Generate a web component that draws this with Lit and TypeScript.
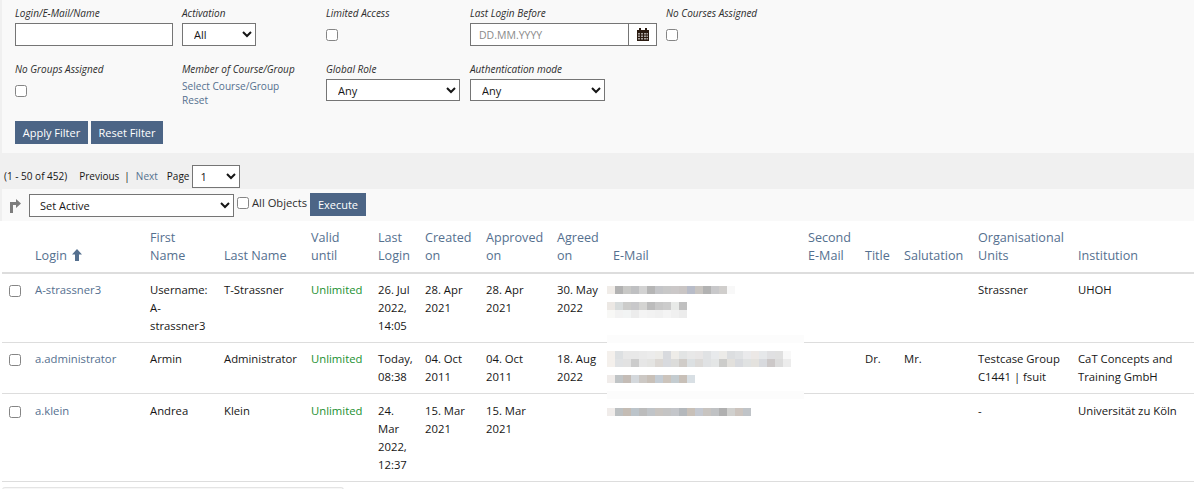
import { LitElement, css, html } from 'lit'
import { customElement } from 'lit/decorators.js'

const rows = [
  {
    login: 'A-strassner3', first: 'Username: A-strassner3', last: 'T-Strassner',
    lastLogin: '26. Jul 2022, 14:05', created: '28. Apr 2021', approved: '28. Apr 2021', agreed: '30. May 2022',
    title: '', salutation: '', org: 'Strassner', inst: 'UHOH',
    blurTop: 12,
    halo: null,
    pixels: [
      'f0ece8 b2b2b2 c8c8c6 bfc0c2 d2d2d2 b5b5b5 c4c5c8 c8c8c8 cbc8c8 c9c5c4 b8bcc8 c8c4c0 b2b2b2 c8c8ca d0cecc f8f8f8',
      '',
      'ece8e4 d8dcdc ccccca c8c8ca d4d4d2 bcbcbc c8c8c8 cccccc e8eae8 c0c0c0',
      'f8f8f6 f2f2f2 f2f4f4 ececec f4f4f4 f2f2f2 f0f0f0 f4f4f4 f0f0f0 ececec',
    ],
  },
  {
    login: 'a.administrator', first: 'Armin', last: 'Administrator',
    lastLogin: 'Today, 08:38', created: '04. Oct 2011', approved: '04. Oct 2011', agreed: '18. Aug 2022',
    title: 'Dr.', salutation: 'Mr.', org: 'Testcase Group C1441 | fsuit', inst: 'CaT Concepts and Training GmbH',
    blurTop: 8,
    halo: -8,
    pixels: [
      'f4f0ec dde0e2 e8e8e8 e8e8e8 eaeaea ececec ecebe8 d8dade eeece8 e2e4e4 e8e8e8 e8e6e6 e0e2e4 e8eaec ecebe8 dcdee0 e0e2e4 eaeaec ece8e6 e6e8ea e0e0e2 e0e0e0 f8f8f8',
      'f4f0ec e0e2e4 e2e2e2 cccccc e6e6e6 e4e4e2 dcd8d4 d8dade dcdcda d0ccc8 dce0e2 dcdad8 e0e2e4 e4e6e6 ccccca e2e0dc d8dade e0e2e2 e4e2de d8dade ccc8c8 dcdcdc ececec',
      '',
      'f0ecea c0c4c6 c4bcb6 d4d8dc ccc8c4 c8c0b8 c4ccd4 ccc4bc c4ccd0 c8c0b8 d8dfe4',
    ],
  },
  {
    login: 'a.klein', first: 'Andrea', last: 'Klein',
    lastLogin: '24. Mar 2022, 12:37', created: '15. Mar 2021', approved: '15. Mar 2021', agreed: '',
    title: '', salutation: '', org: '-', inst: 'Universität zu Köln',
    blurTop: 14,
    halo: -3,
    pixels: [
      'f0ecea bcc0c2 c4bcb4 bcc4ca bcbcbc c0c4c8 c8c4c0 c4c4c4 c4c6ca b4b8bc c8c0b8 c4c8d0 c8c4c0 c0c2c4 b0b0b0 d0d0ce ccc4be c0c4c8',
    ],
  },
]

const colWidths = [27, 115, 74, 87, 67, 47, 61, 71, 56, 195, 57, 39, 74, 100, 122]

@customElement('app-root')
export class AppRoot extends LitElement {
  static styles = css`
    :host {
      display: block;
      width: 1194px;
      height: 489px;
      overflow: hidden;
      background: #fff;
      font-family: 'Open Sans', sans-serif;
      font-size: 11px;
      color: #161616;
    }
    .top { background: #f0f0f0; padding-left: 2px; }
    .filter {
      height: 153px;
      box-sizing: border-box;
      padding: 6px 13px 0;
      background: #f9f9f9;
    }
    .filter-row {
      display: grid;
      grid-template-columns: 167px 144px 144px 196px auto;
      height: 56px;
    }
    .filter-row label {
      display: block;
      font-style: italic;
      font-size: 10px;
      line-height: 15px;
      color: #2d2d2d;
      margin-bottom: 2px;
    }
    input[type='text'],
    select {
      box-sizing: border-box;
      height: 23px;
      border: 1px solid #757575;
      border-radius: 0;
      background-color: #fff;
      font: 11px 'Open Sans', sans-serif;
      color: #161616;
      outline: none;
    }
    select { padding: 0 0 0 7px; }
    input[type='checkbox'] {
      appearance: none;
      box-sizing: border-box;
      display: block;
      width: 12px;
      height: 12px;
      margin: 0;
      background: #fff;
      border: 1px solid #858585;
      border-radius: 2.5px;
    }
    .filter-row input.check { margin-top: 8px; }
    .date { display: flex; width: 187px; height: 23px; }
    .date input { flex: 1; min-width: 0; padding: 0 8px; border-right: none; font-size: 10.5px; }
    .date input::placeholder { color: #8a8a8a; opacity: 1; }
    .date span {
      width: 29px;
      box-sizing: border-box;
      border: 1px solid #757575;
      background: #fff;
      display: flex;
      align-items: center;
      justify-content: center;
    }
    a { color: #55708f; text-decoration: none; }
    .links { line-height: 14px; font-size: 10.1px; }
    .links a { display: block; }
    .buttons { display: flex; gap: 3px; margin-top: 3px; }
    button {
      border: none;
      background: #4c6586;
      color: #fff;
      font: 11px 'Open Sans', sans-serif;
      height: 23px;
      padding: 0;
    }
    .pager {
      height: 36px;
      box-sizing: border-box;
      padding: 12px 0 0 2px;
      display: flex;
      font-size: 10px;
      line-height: 22px;
      align-items: flex-start;
    }
    .pager .next { color: #55708f; margin-left: 6px; }
    .pager select { width: 48px; height: 23px; margin-left: 3px; padding-left: 3px; }
    .actions {
      height: 32px;
      box-sizing: border-box;
      background: #f9f9f9;
      display: flex;
      align-items: flex-start;
      padding-top: 4px;
    }
    .actions svg { margin: 6px 8px 0 8px; }
    .actions select { width: 205px; height: 23px; margin: 1px 3px 0 0; padding-left: 6px; }
    .actions label {
      display: flex;
      align-items: center;
      font-size: 11.2px;
      line-height: 20px;
      color: #2d2d2d;
      margin-right: 3px;
    }
    .actions input[type='checkbox'] { margin-right: 3px; }
    .actions button { width: 56px; }
    table {
      margin-left: 2px;
      width: 1192px;
      table-layout: fixed;
      border-collapse: collapse;
      font-size: 11.3px;
      line-height: 18px;
    }
    th {
      font-weight: 400;
      font-size: 12.6px;
      color: #55708f;
      text-align: left;
      vertical-align: bottom;
      padding: 8px 6px 7px;
      border-bottom: 2px solid #ddd;
      line-height: 18px;
    }
    td {
      vertical-align: top;
      padding: 7px 6px;
      border-bottom: 1px solid #ddd;
      color: #161616;
    }
    tr:last-child td { padding-top: 8px; }
    td input[type='checkbox'] { margin: 4px 0 0 1px; }
    td.email { position: relative; }
    .ok { color: #209030; }
    .arrow { vertical-align: -1px; margin-left: 2px; }
    .blur { position: absolute; left: 0; right: 0; top: 0; }
    .halo {
      position: absolute;
      left: 0;
      width: 197px;
      height: 8px;
      background: #fcfcfc;
    }
    .strip { display: flex; height: 8px; }
    .strip i { display: block; width: 8px; height: 8px; }
    .scroll {
      margin: 5px 0 0 2px;
      width: 342px;
      height: 4px;
      box-sizing: border-box;
      border: 1px solid #e4e4e4;
      border-bottom: none;
      border-radius: 3px 3px 0 0;
      background: #f7f7f7;
    }
  `

  // pixelated stand-in for the hidden addresses
  private blurFor(r: (typeof rows)[number]) {
    return html`
      ${r.halo === null ? '' : html`<div class="halo" style="top:${r.halo}px"></div>`}
      <div class="blur" style="padding-top:${r.blurTop}px">
        ${r.pixels.map(
          (line) => html`<div class="strip">
            ${line
              .split(' ')
              .filter(Boolean)
              .map((c) => html`<i style="background:#${c}"></i>`)}
          </div>`,
        )}
      </div>
    `
  }

  render() {
    return html`
      <div class="top">
        <div class="filter">
          <div class="filter-row">
            <div>
              <label>Login/E-Mail/Name</label>
              <input type="text" style="width:158px" />
            </div>
            <div>
              <label>Activation</label>
              <select style="width:74px"><option>All</option></select>
            </div>
            <div>
              <label>Limited Access</label>
              <input class="check" type="checkbox" />
            </div>
            <div>
              <label>Last Login Before</label>
              <div class="date">
                <input type="text" placeholder="DD.MM.YYYY" />
                <span>
                  <svg width="12" height="13" viewBox="0 0 12 13">
                    <path fill="#2a1a10" d="M0 2h2V0h2v2h4V0h2v2h2v11H0z" />
                    <path fill="#fff" opacity=".6" d="M1 5h2v1.500H1zM4 5h2v1.500H4zM7 5h2v1.500H7zM9.500 5H11v1.500H9.500zM1 7.500h2V9H1zM4 7.500h2V9H4zM7 7.500h2V9H7zM9.500 7.500H11V9H9.500zM1 10h2v1.500H1zM4 10h2v1.500H4zM7 10h2v1.500H7zM9.500 10H11v1.500H9.500z" />
                  </svg>
                </span>
              </div>
            </div>
            <div>
              <label>No Courses Assigned</label>
              <input class="check" type="checkbox" />
            </div>
          </div>
          <div class="filter-row">
            <div>
              <label>No Groups Assigned</label>
              <input class="check" type="checkbox" />
            </div>
            <div>
              <label>Member of Course/Group</label>
              <div class="links"><a>Select Course/Group</a><a>Reset</a></div>
            </div>
            <div>
              <label>Global Role</label>
              <select style="width:134px;height:22px"><option>Any</option></select>
            </div>
            <div>
              <label>Authentication mode</label>
              <select style="width:135px;height:22px"><option>Any</option></select>
            </div>
          </div>
          <div class="buttons">
            <button style="width:73px">Apply Filter</button>
            <button style="width:72px">Reset Filter</button>
          </div>
        </div>
        <div class="pager">
          <span>(1 - 50 of 452)</span>
          <span style="margin-left:12px">Previous</span>
          <span style="margin-left:5px">|</span>
          <span class="next">Next</span>
          <span style="margin-left:9px">Page</span>
          <select><option>1</option></select>
        </div>
        <div class="actions">
          <svg width="11" height="14" viewBox="0 0 11 14">
            <path fill="#7d7d7d" d="M0 14V3h6V0l5 4.500L6 9V6H3v8z" />
          </svg>
          <select><option>Set Active</option></select>
          <label><input type="checkbox" />All Objects</label>
          <button>Execute</button>
        </div>
      </div>
      <table>
        <colgroup>
          ${colWidths.map((w) => html`<col style="width:${w}px" />`)}
        </colgroup>
        <thead>
          <tr>
            <th></th>
            <th>
              Login
              <svg class="arrow" width="10" height="12" viewBox="0 0 10 12">
                <path fill="#55708f" d="M5 0l5 5.500H7V12H3V5.500H0z" />
              </svg>
            </th>
            <th>First<br />Name</th>
            <th>Last Name</th>
            <th>Valid until</th>
            <th>Last Login</th>
            <th>Created on</th>
            <th>Approved on</th>
            <th>Agreed on</th>
            <th>E-Mail</th>
            <th>Second E-Mail</th>
            <th>Title</th>
            <th>Salutation</th>
            <th>Organisational Units</th>
            <th>Institution</th>
          </tr>
        </thead>
        <tbody>
          ${rows.map(
            (r) => html`
              <tr>
                <td><input type="checkbox" /></td>
                <td><a>${r.login}</a></td>
                <td>${r.first}</td>
                <td>${r.last}</td>
                <td class="ok">Unlimited</td>
                <td>${r.lastLogin}</td>
                <td>${r.created}</td>
                <td>${r.approved}</td>
                <td>${r.agreed}</td>
                <td class="email">${this.blurFor(r)}</td>
                <td></td>
                <td>${r.title}</td>
                <td>${r.salutation}</td>
                <td>${r.org}</td>
                <td>${r.inst}</td>
              </tr>
            `,
          )}
        </tbody>
      </table>
      <div class="scroll"></div>
    `
  }
}
